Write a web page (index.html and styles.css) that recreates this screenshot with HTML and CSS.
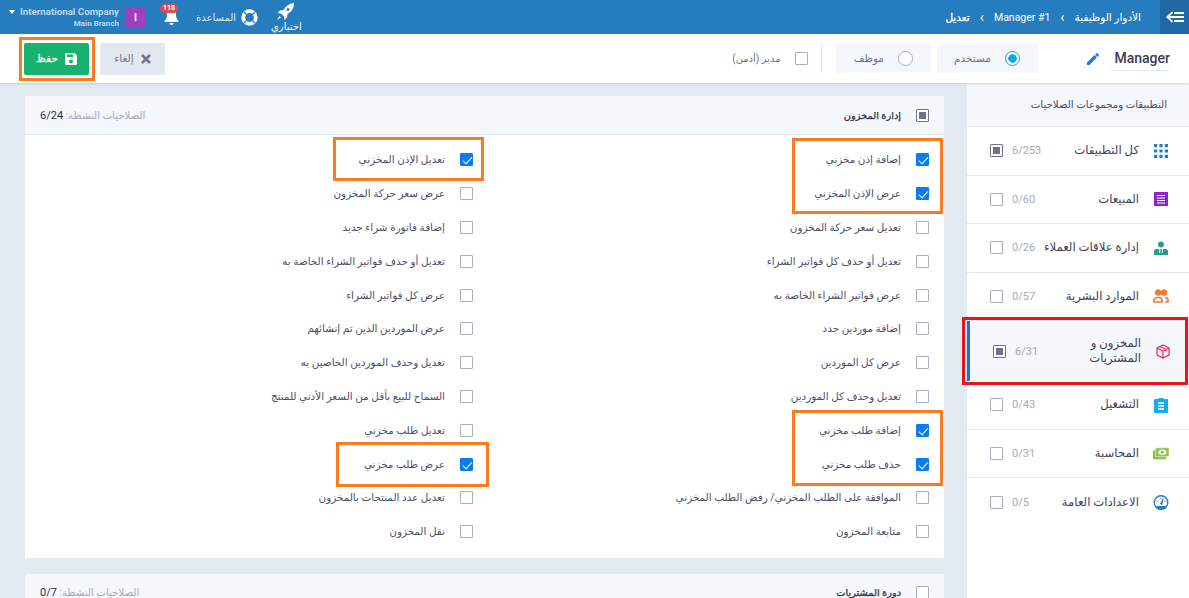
FILE: index.html
```html
<!DOCTYPE html>
<html dir="rtl" lang="ar">
<head>
  <meta charset="utf-8">
  <title>تعديل Manager</title>
  <link rel="stylesheet" href="styles.css">
</head>
<body>
  <div class="topbar">
    <div class="menu-toggle">
      <svg width="18" height="12" viewBox="0 0 18 12"><path d="M0 6 6 .5 7.2 1.7 3.8 5H18v2H3.800l3.400 3.300L6 11.500zM8 1h10v2H8zM8 9h10v2H8z" fill="#fff"/></svg>
    </div>
    <div class="crumbs">
      <span>الأدوار الوظيفية</span>
      <span class="crumb-sep">&#8250;</span>
      <span dir="ltr">Manager #1</span>
      <span class="crumb-sep">&#8250;</span>
      <span class="crumb-now">تعديل</span>
    </div>
    <div class="top-tools">
      <div class="tool-test">
        <svg width="20" height="18" viewBox="0 0 20 18"><path d="M17.500 0C13 .5 9.800 3 7.500 7L4 7.500 1.500 10l3.500.5 3 3 .5 3.500 2.500-2.500.5-3.500c4-2.300 6.500-5.500 6.500-11zM12 5a1.500 1.500 0 1 1 0 3 1.500 1.500 0 0 1 0-3zM3.500 13 1 17l4-2.500z" fill="#fff"/></svg>
        <span>اختباري</span>
      </div>
      <div class="tool-help">
        <svg width="17" height="17" viewBox="0 0 17 17"><circle cx="8.500" cy="8.500" r="6.300" fill="none" stroke="#fff" stroke-width="3.800"/><path d="M3 3l3 3M14 3l-3 3M3 14l3-3M14 14l-3-3" stroke="#267dbe" stroke-width="1.300"/></svg>
        <span>المساعدة</span>
      </div>
      <div class="tool-bell">
        <svg width="17" height="18" viewBox="0 0 17 18"><path d="M8.500 1C5.500 1 4 3.500 4 6.500c0 3.500-1 5-2.500 6.500v1h14v-1C14 11.500 13 10 13 6.500 13 3.500 11.500 1 8.500 1zM6.500 15a2 2 0 0 0 4 0z" fill="#fff"/></svg>
        <span class="bell-badge">118</span>
      </div>
      <div class="company-badge">I</div>
      <div class="company">
        <div class="company-name">International Company</div>
        <div class="company-branch">Main Branch</div>
      </div>
      <span class="company-caret"></span>
    </div>
  </div>

  <div class="toolbar">
    <div class="role-name">Manager</div>
    <svg class="role-edit" width="12" height="12" viewBox="0 0 12 12"><path d="M0 9.500V12h2.500l7.400-7.400-2.500-2.500zM11.800 2.700a.7.7 0 0 0 0-1L10.300.2a.7.7 0 0 0-1 0L8.100 1.400l2.500 2.500z" fill="#1f7fd6"/></svg>
    <div class="role-type role-type-on">
      <span class="radio radio-on"></span>
      <span>مستخدم</span>
    </div>
    <div class="role-type">
      <span class="radio"></span>
      <span>موظف</span>
    </div>
    <div class="role-admin">
      <span class="check"></span>
      <span>مدير (أدمن)</span>
    </div>
    <div class="actions">
      <button class="btn btn-cancel">
        <svg width="10" height="10" viewBox="0 0 10 10"><path d="M1 1l8 8M9 1 1 9" stroke="#70748f" stroke-width="2.600"/></svg>
        <span>إلغاء</span>
      </button>
      <div class="save-mark">
        <button class="btn btn-save">
          <svg width="12" height="12" viewBox="0 0 12 12"><path d="M1 0h8.500L12 2.500V11a1 1 0 0 1-1 1H1a1 1 0 0 1-1-1V1a1 1 0 0 1 1-1zm1 1.500V4h6V1.500zM6 6.500a2 2 0 1 0 0 4 2 2 0 0 0 0-4z" fill="#fff" fill-rule="evenodd"/></svg>
          <span>حفظ</span>
        </button>
      </div>
    </div>
  </div>

  <div class="layout">
    <div class="sidebar">
      <div class="side-title">التطبيقات ومجموعات الصلاحيات</div>

      <div class="side-item">
        <svg class="side-icon" width="14" height="14" viewBox="0 0 13 13" fill="#267dbe"><path d="M0 0h3v3H0zM5 0h3v3H5zM10 0h3v3h-3zM0 5h3v3H0zM5 5h3v3H5zM10 5h3v3h-3zM0 10h3v3H0zM5 10h3v3H5zM10 10h3v3h-3z"/></svg>
        <div class="side-label">كل التطبيقات</div>
        <div class="side-count">6/253</div>
        <span class="check check-part"></span>
      </div>
      <div class="side-item">
        <svg class="side-icon" width="14" height="14" viewBox="0 0 14 14"><path d="M0 0h14v14H0z" fill="#8e24c9"/><path d="M3 3.500h8M3 6h8M3 8.500h8M3 11h8" stroke="#fff" stroke-width="1.200"/></svg>
        <div class="side-label">المبيعات</div>
        <div class="side-count">0/60</div>
        <span class="check"></span>
      </div>
      <div class="side-item">
        <svg class="side-icon" width="14" height="14" viewBox="0 0 14 14" fill="#26a08d"><circle cx="7" cy="3.500" r="3"/><path d="M0 14V9.500L1.500 8H5.200v4h1V8h1.600v4h1V8h3.700L14 9.500V14z"/></svg>
        <div class="side-label">إدارة علاقات العملاء</div>
        <div class="side-count">0/26</div>
        <span class="check"></span>
      </div>
      <div class="side-item">
        <svg class="side-icon" width="16" height="14" viewBox="0 0 16 14" fill="none" stroke="#f5793b" stroke-width="1.700"><circle cx="5" cy="3.500" r="2.400" fill="#f5793b"/><circle cx="11" cy="3.500" r="2.400" fill="#f5793b"/><path d="M1 13v-1.500C1 9.500 3 8.500 5 8.500s4 1 4 3V13zM12 8.500c2 0 3 1 3 3V13h-3"/></svg>
        <div class="side-label">الموارد البشرية</div>
        <div class="side-count">0/57</div>
        <span class="check"></span>
      </div>
      <div class="side-item side-item-on">
        <svg class="side-icon" width="15" height="15" viewBox="0 0 15 15" fill="none" stroke="#ec2f78" stroke-width="1.300"><path d="M7.500 1 13.500 4v7l-6 3-6-3V4zM1.500 4l6 3 6-3M7.500 7v7M4.500 2.500l6 3v2"/></svg>
        <div class="side-label">المخزون و المشتريات</div>
        <div class="side-count">6/31</div>
        <span class="check check-part"></span>
      </div>
      <div class="side-item">
        <svg class="side-icon" width="14" height="16" viewBox="0 0 14 16"><path d="M1 2h3.500V1h5v1H13a1 1 0 0 1 1 1v12a1 1 0 0 1-1 1H1a1 1 0 0 1-1-1V3a1 1 0 0 1 1-1z" fill="#1aa9ec"/><path d="M4 6h6M4 9h6M4 12h6" stroke="#fff" stroke-width="1.300"/></svg>
        <div class="side-label">التشغيل</div>
        <div class="side-count">0/43</div>
        <span class="check"></span>
      </div>
      <div class="side-item">
        <svg class="side-icon" width="18" height="13" viewBox="0 0 18 13"><path d="M0 3h15v10H0z" fill="#8bc34a"/><path d="M3 0h15v10H3z" fill="#8bc34a" stroke="#fff" stroke-width=".6"/><ellipse cx="10.500" cy="5" rx="4.500" ry="3" fill="#fff"/><circle cx="10.500" cy="5" r="1.800" fill="#8bc34a"/></svg>
        <div class="side-label">المحاسبة</div>
        <div class="side-count">0/31</div>
        <span class="check"></span>
      </div>
      <div class="side-item">
        <svg class="side-icon" width="15" height="15" viewBox="0 0 15 15"><circle cx="7.500" cy="7.500" r="6.800" fill="#fff" stroke="#267dbe" stroke-width="1.400"/><path d="M3 11h9l1 2-3 1.500H5L2 13z" fill="#267dbe"/><path d="M7 9 9.500 4 8.300 9.500z" fill="#267dbe" stroke="#267dbe"/><path d="M3.500 6.500h1M7.500 3v1M11 6.500h1" stroke="#267dbe"/></svg>
        <div class="side-label">الاعدادات العامة</div>
        <div class="side-count">0/5</div>
        <span class="check"></span>
      </div>
    </div>

    <div class="content">
      <div class="panel">
        <div class="panel-head">
          <span class="check check-part"></span>
          <div class="panel-title">إدارة المخزون</div>
          <div class="panel-active">الصلاحيات النشطة: <b>6/24</b></div>
        </div>
        <div class="perms">
          <div class="perm"><span class="check check-on"></span>إضافة إذن مخزني</div>
          <div class="perm"><span class="check check-on"></span>تعديل الإذن المخزني</div>
          <div class="perm"><span class="check check-on"></span>عرض الإذن المخزني</div>
          <div class="perm"><span class="check"></span>عرض سعر حركة المخزون</div>
          <div class="perm"><span class="check"></span>تعديل سعر حركة المخزون</div>
          <div class="perm"><span class="check"></span>إضافة فاتورة شراء جديد</div>
          <div class="perm"><span class="check"></span>تعديل أو حذف كل فواتير الشراء</div>
          <div class="perm"><span class="check"></span>تعديل أو حذف فواتير الشراء الخاصة به</div>
          <div class="perm"><span class="check"></span>عرض فواتير الشراء الخاصة به</div>
          <div class="perm"><span class="check"></span>عرض كل فواتير الشراء</div>
          <div class="perm"><span class="check"></span>إضافة موردين جدد</div>
          <div class="perm"><span class="check"></span>عرض الموردين الذين تم إنشائهم</div>
          <div class="perm"><span class="check"></span>عرض كل الموردين</div>
          <div class="perm"><span class="check"></span>تعديل وحذف الموردين الخاصين به</div>
          <div class="perm"><span class="check"></span>تعديل وحذف كل الموردين</div>
          <div class="perm"><span class="check"></span>السماح للبيع بأقل من السعر الأدني للمنتج</div>
          <div class="perm"><span class="check check-on"></span>إضافة طلب مخزني</div>
          <div class="perm"><span class="check"></span>تعديل طلب مخزني</div>
          <div class="perm"><span class="check check-on"></span>حذف طلب مخزني</div>
          <div class="perm"><span class="check check-on"></span>عرض طلب مخزني</div>
          <div class="perm"><span class="check"></span>الموافقة على الطلب المخزني/ رفض الطلب المخزني</div>
          <div class="perm"><span class="check"></span>تعديل عدد المنتجات بالمخزون</div>
          <div class="perm"><span class="check"></span>متابعة المخزون</div>
          <div class="perm"><span class="check"></span>نقل المخزون</div>
        </div>
        <div class="mark mark-a"></div>
        <div class="mark mark-b"></div>
        <div class="mark mark-c"></div>
        <div class="mark mark-d"></div>
      </div>

      <div class="panel">
        <div class="panel-head">
          <span class="check"></span>
          <div class="panel-title">دورة المشتريات</div>
          <div class="panel-active">الصلاحيات النشطة: <b>0/7</b></div>
        </div>
      </div>
    </div>
  </div>
  <div class="side-mark"></div>
</body>
</html>
```

FILE: styles.css
```css
:root {
  --blue: #267dbe;
  --page-bg: #e3e9f1;
  --soft-bg: #f4f7fb;
  --line: #e4e8f0;
  --text: #4b4e68;
  --muted: #a6a9c0;
  --orange: #f97c22;
}

* {
  box-sizing: border-box;
}

html, body {
  height: 100%;
}

body {
  margin: 0;
  position: relative;
  overflow: hidden;
  background-color: var(--page-bg);
  font-family: Roboto, "DejaVu Sans", sans-serif;
  font-size: 11px;
  color: var(--text);
}

/* top bar */
.topbar {
  display: flex;
  align-items: center;
  height: 34px;
  background-color: var(--blue);
  color: #fff;
}

.menu-toggle {
  display: flex;
  align-items: center;
  justify-content: center;
  width: 29px;
  height: 34px;
  background-color: #2068a6;
}

.crumbs {
  display: flex;
  align-items: center;
  gap: 10px;
  margin-right: 19px;
  font-size: 10.500px;
}

.crumb-sep {
  font-size: 14px;
  line-height: 14px;
}

.crumb-now {
  -webkit-text-stroke: 0.3px #fff;
}

.top-tools {
  display: flex;
  align-items: center;
  margin-right: auto;
  padding-left: 9px;
}

.tool-test {
  display: flex;
  flex-direction: column;
  align-items: center;
  font-size: 10px;
  line-height: 11px;
  margin-left: 13px;
}

.tool-help {
  display: flex;
  align-items: center;
  gap: 5px;
  font-size: 10px;
  color: #dce9f5;
  margin-left: 16px;
}

.tool-bell {
  position: relative;
  height: 18px;
  margin-left: 17px;
}

.bell-badge {
  position: absolute;
  top: -4px;
  left: -3px;
  padding: 0 3px;
  border-radius: 6px;
  background-color: #d0505c;
  font-size: 7px;
  line-height: 9px;
  font-weight: 700;
}

.company-badge {
  display: flex;
  align-items: center;
  justify-content: center;
  width: 21px;
  height: 21px;
  margin-left: 6px;
  background-color: #a33fbd;
  font-size: 10px;
  font-weight: 700;
}

.company {
  direction: ltr;
  text-align: right;
  color: #bcd7ed;
  font-weight: 700;
}

.company-name {
  font-size: 9.700px;
  line-height: 12px;
}

.company-branch {
  font-size: 8px;
  line-height: 11px;
}

.company-caret {
  width: 0;
  height: 0;
  margin-right: 5px;
  margin-bottom: 11px;
  border-top: 4px solid #fff;
  border-left: 3.500px solid transparent;
  border-right: 3.500px solid transparent;
}

/* toolbar */
.toolbar {
  position: relative;
  display: flex;
  align-items: center;
  height: 49px;
  padding: 0 19px;
  background-color: #fff;
  box-shadow: 0 1px 2px rgba(60, 70, 100, 0.18);
}

.role-name {
  width: 60px;
  height: 25px;
  border-bottom: 1px solid var(--line);
  font-size: 14px;
  font-weight: 500;
  line-height: 25px;
  text-align: right;
  direction: ltr;
  color: #3a3d52;
}

.role-edit {
  margin-right: 11px;
}

.role-type {
  display: flex;
  align-items: center;
  gap: 14px;
  height: 29px;
  padding: 0 18px;
  margin-left: 6px;
  font-size: 10.500px;
  background-color: var(--soft-bg);
  color: #6d7088;
}

.role-type:nth-of-type(1) {
  width: 101px;
}

.role-type-on {
  width: 101px;
  margin-right: 49px;
}

.radio {
  flex: none;
  width: 15px;
  height: 15px;
  border: 1px solid #a9adc4;
  border-radius: 50%;
  background-color: #fff;
}

.radio-on {
  border-color: #0aa7ee;
  background: radial-gradient(circle, #0aa7ee 0 4px, #fff 4.500px);
}

.role-admin {
  display: flex;
  align-items: center;
  gap: 14px;
  height: 29px;
  margin-right: 8px;
  padding-right: 13px;
  border-right: 1px solid var(--line);
  font-size: 10px;
  color: #6d7088;
}

.actions {
  display: flex;
  align-items: center;
  gap: 5px;
  margin-right: auto;
}

.save-mark {
  padding: 3px 3px 3px 2px;
  border: 3px solid var(--orange);
}

.btn {
  display: flex;
  align-items: center;
  justify-content: center;
  gap: 7px;
  width: 65px;
  height: 32px;
  padding: 0;
  border: 0;
  border-radius: 2px;
  font: inherit;
  font-size: 10.500px;
}

.btn-cancel {
  background-color: #e3e8f0;
  color: #70748f;
}

.btn-save {
  background-color: #17b26f;
  color: #fff;
  -webkit-text-stroke: 0.3px #fff;
}

/* layout */
.layout {
  display: flex;
  height: calc(100% - 83px);
}

.sidebar {
  flex: none;
  width: 222px;
  background-color: #fff;
}

.side-title {
  height: 44px;
  padding: 0 22px;
  background-color: var(--soft-bg);
  border-bottom: 1px solid var(--line);
  font-size: 10.200px;
  line-height: 43px;
}

.side-item {
  display: flex;
  align-items: center;
  min-height: 48.500px;
  padding: 0 20px 0 0;
  border-bottom: 1px solid var(--line);
}

.side-icon {
  flex: none;
  width: 16px;
}

.side-label {
  flex: 1;
  margin-right: 14px;
  font-size: 11.700px;
  line-height: 15px;
  white-space: nowrap;
  color: #3f4258;
}

.side-count {
  width: 32px;
  direction: ltr;
  color: var(--muted);
  font-size: 11px;
  text-align: left;
}

.side-item .check {
  margin-left: 23px;
  margin-right: 9px;
}

.side-item:last-child {
  border-bottom: 0;
}

.side-item-on {
  min-height: 60px;
  padding-right: 18px;
  background-color: var(--soft-bg);
  border-left: 3px solid #0a75e6;
  border-bottom: 0;
}

.side-item-on .side-label {
  padding-left: 20px;
  white-space: normal;
}

.side-mark {
  position: absolute;
  top: 317px;
  left: 962px;
  width: 226px;
  height: 68px;
  border: 3px solid #e8141c;
}

/* content */
.content {
  flex: 1;
  padding: 12px 22px 0 24px;
}

.panel {
  position: relative;
  margin-bottom: 14px;
  background-color: #fff;
  border: 1px solid var(--line);
}

.panel-head {
  display: flex;
  align-items: center;
  height: 39px;
  padding: 0 15px;
  background-color: var(--soft-bg);
  border-bottom: 1px solid var(--line);
}

.panel-title {
  margin-right: 15px;
  font-size: 9.800px;
  color: #2c2e40;
  -webkit-text-stroke: 0.25px #2c2e40;
}

.panel-active {
  margin-right: auto;
  font-size: 10.200px;
  color: var(--muted);
}

.panel-active b {
  font-size: 11px;
  font-weight: 400;
  color: #2c2e40;
}

.perms {
  display: grid;
  grid-template-columns: 1fr 1fr;
  column-gap: 23px;
  padding: 8px 15px 9px;
}

.perm {
  display: flex;
  align-items: center;
  gap: 15px;
  height: 33.800px;
  font-size: 10.400px;
}

/* checkbox */
.check {
  position: relative;
  display: block;
  flex: none;
  width: 13px;
  height: 13px;
  border: 1px solid #a9adc4;
  border-radius: 1px;
  background-color: #fff;
}

.check-part {
  border-color: #6d7291;
}

.check-part::after {
  content: "";
  position: absolute;
  top: 2px;
  left: 2px;
  width: 7px;
  height: 7px;
  background-color: #6d7291;
}

.check-on {
  border-color: #0a7bf0;
  background-color: #0a7bf0;
}

.check-on::after {
  content: "";
  position: absolute;
  top: 1px;
  left: 3.500px;
  width: 4px;
  height: 7.500px;
  border: solid #fff;
  border-width: 0 1px 1px 0;
  transform: rotate(42deg);
}

/* orange notes over the list */
.mark {
  position: absolute;
  border: 3px solid var(--orange);
}

.mark-a {
  top: 42px;
  left: 767px;
  width: 151px;
  height: 76px;
}

.mark-b {
  top: 41px;
  left: 308px;
  width: 151px;
  height: 44px;
}

.mark-c {
  top: 314px;
  left: 767px;
  width: 151px;
  height: 76px;
}

.mark-d {
  top: 346px;
  left: 311px;
  width: 153px;
  height: 45px;
}
```
